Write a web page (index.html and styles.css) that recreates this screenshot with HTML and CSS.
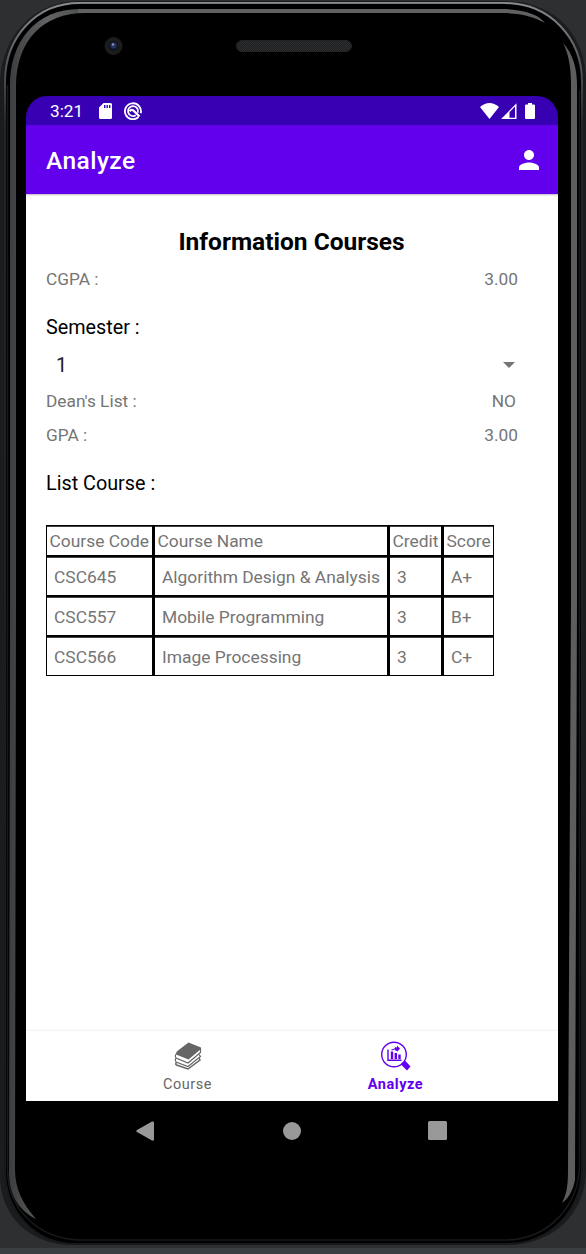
FILE: index.html
```html
<!DOCTYPE html>
<html lang="en">
<head>
<meta charset="utf-8">
<title>Analyze</title>
<link rel="stylesheet" href="styles.css">
</head>
<body>
<div class="device">
  <svg class="shell" viewBox="0 0 586 1254" aria-hidden="true">
    <defs>
      <linearGradient id="rim" x1="0" x2="1" y1="0" y2="0">
        <stop offset="0" stop-color="#3c3d3e"/><stop offset=".5" stop-color="#626364"/><stop offset="1" stop-color="#4c4d4e"/>
      </linearGradient>
      <linearGradient id="edge" x1="0" x2="0" y1="0" y2="1254" gradientUnits="userSpaceOnUse">
        <stop offset="0" stop-color="#8b8e91"/><stop offset=".05" stop-color="#55585a"/><stop offset=".1" stop-color="#242526"/><stop offset="1" stop-color="#171819"/>
      </linearGradient>
      <pattern id="mesh" width="2" height="2" patternUnits="userSpaceOnUse"><path fill="#303132" d="M0 0h1v1H0zM1 1h1v1H1z"/></pattern>
    </defs>
    <rect width="586" height="1254" fill="#2e2f31"/>
    <rect y="1248" width="586" height="6" fill="#3c3f41"/>
    <path fill="#1b1c1d" d="M80 1H504C555 1 586 35 586 82V1168C586 1215 553 1245 506 1245H72C29 1245 0 1215 0 1176V82C2 35 34 1 80 1Z"/>
    <path fill="#000" stroke="url(#edge)" stroke-width="2" d="M80 3H504C550 3 582 38 582 82V1168C582 1211 550 1244 506 1244H76C34 1244 5 1211 5 1170V82C5 38 35 3 80 3Z"/>
    <path fill="none" stroke="#17191b" stroke-width="1.5" d="M579.5 90V1165C579 1205 550 1239 506 1240H80C40 1239 8 1211 7.500 1170V85"/>
    <path fill="url(#rim)" d="M80 9C35 9 10 42 10 85V600L9 1175C10 1197 20 1211 36 1219C22 1203 15 1188 15 1170L16 600V85C17 40 43 13 85 13Z"/>
    <path fill="#606162" d="M78 9H500C525 9 539 15 545 23C532 16 520 13 500 13H78Z"/>
    <path fill="#5c5d5e" d="M563 43C573 54 577 68 577 85V600L575 1180C573 1191 568 1199 562 1203C566 1195 568 1188 568 1170L571 600V85C571 68 569 55 563 43Z"/>
    <path fill="none" stroke="#777a7c" d="M80 3.500H505"/>
    <circle cx="113.500" cy="46" r="9" fill="#1c1c1d"/>
    <circle cx="113.500" cy="46" r="5" fill="#101529"/>
    <circle cx="113.500" cy="45.500" r="3" fill="#25345f"/>
    <circle cx="113" cy="44.500" r="1.200" fill="#8792b0"/>
    <rect x="236.500" y="40.500" width="115" height="11" rx="5.500" fill="#1c1d1e" stroke="#222324"/>
    <rect x="237" y="41" width="114" height="10" rx="5" fill="url(#mesh)"/>
  </svg>

  <div class="screen">
    <header class="status">
      <span class="clock">3:21</span>
      <svg class="sd" viewBox="0 0 13 16"><path fill="#fff" fill-rule="evenodd" d="M4.500 0H11.500Q13 0 13 1.500V14.500Q13 16 11.500 16H1.500Q0 16 0 14.500V4.500ZM5 2V5H6.400V2ZM7.500 2V5H8.900V2ZM10 2V5H11.400V2Z"/></svg>
      <svg class="dnd" viewBox="0 0 18 18"><g fill="none" stroke="#fff" stroke-width="1.800"><path d="M14.500 15A8 8 0 1 1 16.700 11.200"/><path d="M11.800 13.200A5 5 0 1 1 13.700 10.800"/><path stroke-width="2.300" d="M5.500 9.300Q8 6.500 10 9L15.500 14.500"/></g></svg>
      <span class="spring"></span>
      <svg class="wifi" viewBox="0 0 19 16"><path fill="#fff" d="M0 4Q9.500-4 19 4L9.500 16Z"/></svg>
      <svg class="signal" viewBox="0 0 16 16"><path fill="#fff" fill-rule="evenodd" d="M0 16L15.500 .3V16ZM8.500 9.300V14.700H14V3.500Z"/></svg>
      <svg class="battery" viewBox="0 0 10 16"><path fill="#fff" d="M3 0H7V1.500H9Q10 1.500 10 2.500V15Q10 16 9 16H1Q0 16 0 15V2.500Q0 1.500 1 1.500H3Z"/></svg>
    </header>
    <div class="appbar">
      <h1>Analyze</h1>
      <svg class="person" viewBox="4 4 16 16"><path fill="#fff" d="M12 12c2.210 0 4-1.790 4-4s-1.790-4-4-4-4 1.790-4 4 1.790 4 4 4zm0 2c-2.670 0-8 1.340-8 4v2h16v-2c0-2.660-5.330-4-8-4z"/></svg>
    </div>

    <main class="content">
      <h2>Information Courses</h2>
      <div class="row cgpa"><span>CGPA :</span><span class="num">3.00</span></div>
      <div class="label semester">Semester :</div>
      <div class="spinner"><span>1</span><svg viewBox="0 0 12 6"><path fill="#757575" d="M0 0H12L6 6Z"/></svg></div>
      <div class="row dean"><span>Dean's List :</span><span class="word">NO</span></div>
      <div class="row gpa"><span>GPA :</span><span class="num">3.00</span></div>
      <div class="label list">List Course :</div>
      <div class="table">
        <div class="head">Course Code</div><div class="head">Course Name</div><div class="head">Credit</div><div class="head">Score</div>
        <div>CSC645</div><div>Algorithm Design &amp; Analysis</div><div>3</div><div>A+</div>
        <div>CSC557</div><div>Mobile Programming</div><div>3</div><div>B+</div>
        <div>CSC566</div><div>Image Processing</div><div>3</div><div>C+</div>
      </div>
    </main>

    <nav class="tabs">
      <div class="tab">
        <svg viewBox="0 0 30 30"><path fill="#666" d="M15.500 1.500L28 6.500V8L15.500 18.500L3 13.500Q2.500 11 5 9.500Z"/><g fill="none" stroke="#666" stroke-width="1.200"><path d="M3 13Q1.500 15 3 17L15 22L27.500 11.500V7"/><path d="M3 17Q1.500 19 3 21L15 25.500L27.500 15.500L26 13.500"/><path stroke-width="1.500" d="M3.500 21.500Q2 23 3.500 24L15 28L27 19L26 17"/></g></svg>
        <span>Course</span>
      </div>
      <div class="tab active">
        <svg viewBox="0 0 30 30"><g fill="none" stroke="#6200ee"><circle cx="13" cy="13.500" r="12.300" stroke-width="1.400"/><path stroke-width="1.400" d="M7 8.500V19.300H20.500"/><path stroke-width="2.400" d="M11 10.500V18M14.800 12V18M18.500 13.500V18"/><path stroke-width="1.300" d="M10.500 9L15 7.500"/></g><path fill="#6200ee" d="M14 6L16 6.500V4.500L19 7.500L16.500 10.500L14 9ZM20.500 22L24.500 20L29.500 25.500L26 29.500L21 24.500Z"/></svg>
        <span>Analyze</span>
      </div>
    </nav>
    <div class="sysnav">
      <svg viewBox="0 0 18 20"><path fill="#999" d="M1 9L16 .5Q18 0 18 1.500V18.500Q18 20 16 19.500L1 11Q-.5 10 1 9Z"/></svg>
      <svg viewBox="0 0 18 18"><circle cx="9" cy="9" r="9" fill="#999"/></svg>
      <svg viewBox="0 0 19 19"><rect width="19" height="19" rx="1.500" fill="#999"/></svg>
    </div>
  </div>
</div>
</body>
</html>
```
FILE: styles.css
```css
* { box-sizing: border-box; }
body { margin: 0; font-family: Roboto, sans-serif; background: #2e2f31; }
svg { display: block; flex: none; }
h1, h2 { margin: 0; }

.device { position: relative; width: 586px; height: 1254px; padding: 96px 28px 94px 26px; overflow: hidden; }
.shell { position: absolute; inset: 0; width: 586px; height: 1254px; }
.screen { position: relative; width: 532px; height: 1064px; border-radius: 21px; overflow: hidden; display: flex; flex-direction: column; }

.status { height: 29px; flex: none; background: #3700b3; display: flex; align-items: center; padding: 1px 23px 0 24px; color: #fff; }
.clock { font-size: 17.2px; line-height: 20px; width: 49px; }
.sd { width: 13px; height: 16px; }
.dnd { width: 18px; height: 18px; margin-left: 12px; }
.spring { flex: 1; }
.wifi { width: 19px; height: 16px; }
.signal { width: 16px; height: 16px; margin-left: 2px; }
.battery { width: 10px; height: 16px; margin-left: 8px; }

.appbar { height: 69px; flex: none; background: #6200ee; display: flex; align-items: center; justify-content: space-between; padding: 1px 19.5px 0 20px; color: #fff; }
.appbar h1 { font-size: 24.5px; font-weight: 500; line-height: 30px; letter-spacing: .45px; padding-top: 1px; }
.person { width: 20px; height: 20px; }

.content { flex: 1; padding: 33px 40px 0 20px; background: #fff; box-shadow: inset 0 2px 2px -1px #bbb; color: #757575; }
.content h2 { font-size: 24.5px; line-height: 30px; text-align: center; color: #000; padding-left: 19px; }
.row { display: flex; justify-content: space-between; font-size: 17.3px; line-height: 22px; }
.cgpa { margin-top: 11px; }
.word { padding-right: 2px; }
.label { font-size: 19.8px; line-height: 24px; color: #000; }
.semester { margin-top: 26px; }
.spinner { display: flex; justify-content: space-between; align-items: center; height: 26px; margin-top: 12px; padding: 0 3px 0 10px; font-size: 19.8px; color: #212121; }
.spinner svg { width: 12px; height: 6px; }
.dean { margin-top: 12px; }
.gpa { margin-top: 12px; }
.list { margin-top: 26px; }

.table { display: grid; grid-template-columns: 105px 232px 51px 49px; grid-template-rows: 29px 38px 38px 38px; column-gap: 3px; row-gap: 2px; width: 448px; padding: 1px; margin-top: 29px; background: #000; font-size: 17.4px; }
.table div { background: #fff; box-shadow: inset 0 1px #444; padding-left: 7px; line-height: 41px; height: 100%; overflow: hidden; white-space: nowrap; }
.table .head { padding-left: 2.5px; line-height: 31px; }

.tabs { height: 70px; flex: none; display: flex; justify-content: center; gap: 103px; padding: 10px 1px 0 0; box-shadow: 0 -1px 2px #f0f0f0; background: #fff; }
.tab { width: 105px; display: flex; flex-direction: column; align-items: center; font-size: 14.5px; line-height: 18px; color: #666; }
.tab svg { width: 30px; height: 30px; }
.tab span { margin-top: 5px; letter-spacing: .55px; }
.active { color: #6200ee; font-weight: 700; }

.sysnav { height: 59px; flex: none; background: #000; display: flex; align-items: center; justify-content: space-between; padding: 0 111px 0 110px; }
.sysnav svg { width: 18px; height: 20px; }
.sysnav svg:nth-child(2) { margin-left: 1px; }
.sysnav svg:last-child { width: 19px; height: 19px; }
```
